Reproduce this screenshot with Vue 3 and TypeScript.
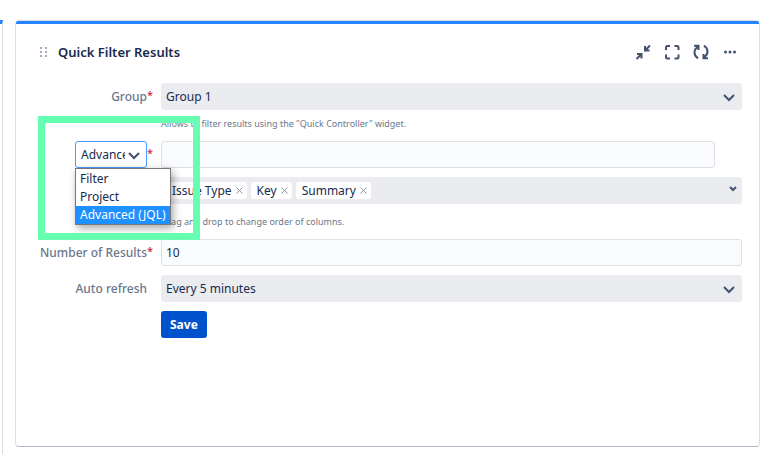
<script setup lang="ts">
import { ref } from 'vue'

const group = ref('Group 1')
const source = ref('Advanced (JQL)')
const sources = ['Filter', 'Project', 'Advanced (JQL)']
const query = ref('')
const columns = ref(['Issue Type', 'Key', 'Summary'])
const count = ref('10')
const refresh = ref('Every 5 minutes')

function removeColumn(name: string) {
  columns.value = columns.value.filter((c) => c !== name)
}
</script>

<template>
  <main class="board">
    <div class="neighbour"></div>
    <section class="gadget">
      <header class="head">
        <svg class="grip" width="8" height="10" viewBox="0 0 8 10" aria-hidden="true">
          <path d="M0 0h2v2H0zM5 0h2v2H5zM0 4h2v2H0zM5 4h2v2H5zM0 8h2v2H0zM5 8h2v2H5z" />
        </svg>
        <h1>Quick Filter Results</h1>
        <div class="tools">
          <button type="button" aria-label="Minimize">
            <svg width="16" height="16" viewBox="0 0 16 16">
              <path d="M15 1.500L10.500 6M10 2v4.500h4.500M1.500 15L6 10.500M2 10h4.500v4.500" />
            </svg>
          </button>
          <button type="button" aria-label="Maximize">
            <svg width="16" height="16" viewBox="0 0 16 16">
              <path d="M2 6V3.500q0-1.500 1.500-1.500H6M10.500 2H13q1.500 0 1.500 1.500V6M14.500 10.500V13q0 1.500-1.500 1.500h-2.500M6 14.500H3.500q-1.500 0-1.500-1.500v-2.500" />
            </svg>
          </button>
          <button type="button" aria-label="Refresh">
            <svg width="16" height="16" viewBox="0 0 16 16">
              <path d="M5 14.300Q1.500 12 1.500 8.500Q1.500 5 5 2.500M1 1.700H5.500V6M11 1.700Q14.500 4 14.500 7.500Q14.500 11 11 13.500M15 14.300H10.500V10" />
            </svg>
          </button>
          <button type="button" aria-label="More">
            <svg width="16" height="16" viewBox="0 0 16 16">
              <g class="dots"><circle cx="3.500" cy="8" r="1.500" /><circle cx="8" cy="8" r="1.500" /><circle cx="12.500" cy="8" r="1.500" /></g>
            </svg>
          </button>
        </div>
      </header>

      <form class="form" @submit.prevent>
        <div class="row">
          <div class="name"><label for="group">Group</label><span class="req">*</span></div>
          <div class="field">
            <div class="pick">
              <select id="group" v-model="group"><option>Group 1</option></select>
              <svg class="chevron" width="12" height="8" viewBox="0 0 12 8"><path d="M1 1l5 5 5-5" /></svg>
            </div>
            <p class="hint">Allows to filter results using the "Quick Controller" widget.</p>
          </div>
        </div>

        <div class="row">
          <div class="name">
            <div class="source">
              <select v-model="source" aria-label="Source">
                <option v-for="s in sources" :key="s">{{ s }}</option>
              </select>
              <svg class="chevron" width="12" height="8" viewBox="0 0 12 8"><path d="M1 1l5 5 5-5" /></svg>
              <ul class="menu" role="listbox" aria-label="Source">
                <li
                  v-for="s in sources"
                  :key="s"
                  role="option"
                  :aria-selected="s === source"
                  :class="{ active: s === source }"
                  @click="source = s"
                >{{ s }}</li>
              </ul>
            </div>
            <span class="req">*</span>
          </div>
          <div class="field query">
            <input v-model="query" type="text" aria-label="Query" />
          </div>
        </div>

        <div class="row">
          <div class="name"></div>
          <div class="field">
            <div class="tags">
              <span v-for="c in columns" :key="c" class="tag">
                {{ c }}
                <button type="button" :aria-label="'Remove ' + c" @click="removeColumn(c)">
                  <svg width="7" height="7" viewBox="0 0 7 7"><path d="M0.500 0.500l6 6M6.500 0.500l-6 6" /></svg>
                </button>
              </span>
              <svg class="chevron small" width="8" height="6" viewBox="0 0 8 6"><path d="M1 1l3 3 3-3" /></svg>
            </div>
            <p class="hint roomy">Drag and drop to change order of columns.</p>
          </div>
        </div>

        <div class="row">
          <div class="name"><label for="count">Number of Results</label><span class="req">*</span></div>
          <div class="field"><input id="count" v-model="count" type="text" /></div>
        </div>

        <div class="row">
          <div class="name"><label for="refresh">Auto refresh</label><span class="req"></span></div>
          <div class="field">
            <div class="pick">
              <select id="refresh" v-model="refresh"><option>Every 5 minutes</option></select>
              <svg class="chevron" width="12" height="8" viewBox="0 0 12 8"><path d="M1 1l5 5 5-5" /></svg>
            </div>
          </div>
        </div>

        <div class="row actions">
          <div class="name"></div>
          <div class="field"><button type="submit" class="save">Save</button></div>
        </div>
      </form>
      <div class="highlight"></div>
    </section>
  </main>
</template>

<style>
body {
  background: #fff;
}
</style>

<style scoped>
* {
  box-sizing: border-box;
}
.board {
  display: flex;
  gap: 12px;
  min-height: 100vh;
  padding: 20px 12px 0 0;
  color: #172b4d;
  font: 12px/18px "Noto Sans", sans-serif;
}
select,
input,
button {
  font: inherit;
  color: inherit;
}
.neighbour {
  flex: 0 0 3px;
  border-top: 4px solid #2684ff;
  border-right: 1px solid #dcdfe6;
}
.gadget {
  position: relative;
  flex: 1;
  min-width: 0;
  margin-bottom: 7px;
  border: 1px solid #dcdfe6;
  border-bottom-color: #b0b8c8;
  border-radius: 4px;
}
.gadget::before {
  content: "";
  display: block;
  height: 3px;
  background: #2684ff;
  border-radius: 2px 2px 0 0;
}
.head {
  display: flex;
  align-items: center;
  height: 56px;
  padding: 0 21px 0 24px;
}
.grip {
  margin-right: 10px;
}
h1 {
  flex: 1;
  margin: 0;
  font-size: 13px;
  font-weight: 600;
}
.tools {
  display: flex;
  gap: 13px;
}
.tools button {
  display: flex;
  padding: 0;
  border: 0;
  background: none;
}
svg path {
  fill: none;
  stroke: #42526e;
  stroke-width: 2;
}
.dots {
  fill: #42526e;
}
.grip path {
  fill: #a5adba;
  stroke: none;
}
.form {
  padding: 3px 17px 24px 16px;
}
.row {
  display: flex;
  gap: 8px;
  margin-bottom: 9px;
}
.name {
  display: flex;
  flex: 0 0 121px;
  justify-content: flex-end;
  align-items: center;
  height: 27px;
  color: #6b778c;
  font-weight: 500;
  white-space: nowrap;
}
.req {
  flex: 0 0 6px;
  align-self: flex-start;
  min-width: 0;
  color: #d0243c;
  font-size: 11px;
  line-height: 24px;
}
.field {
  flex: 1;
  min-width: 0;
}
.query {
  padding-right: 27px;
}
.pick,
.source {
  position: relative;
}
.pick select,
.field input {
  display: block;
  width: 100%;
  height: 27px;
  padding: 0 5px;
  border: 0;
  border-radius: 3px;
  background: #ebecf0;
  appearance: none;
}
.field input {
  padding: 0 4px;
  border: 1px solid #dfe1e6;
  background: #fafbfc;
}
.chevron {
  position: absolute;
  right: 7px;
  top: 11px;
  pointer-events: none;
}
.chevron.small {
  right: 5px;
  top: 9px;
}
.hint {
  margin: 0;
  padding-top: 6px;
  color: #6b778c;
  font-size: 9px;
  line-height: 16px;
}
.hint.roomy {
  padding-top: 10px;
}
.source {
  flex: 0 0 72px;
  color: #172b4d;
  font-weight: 400;
}
.source select {
  display: block;
  width: 100%;
  height: 27px;
  padding: 0 21px 0 5px;
  border: 1px solid #4c9aff;
  border-radius: 3px;
  background: #fff;
  appearance: none;
}
.menu {
  position: absolute;
  z-index: 1;
  top: 27px;
  left: 0;
  width: 96px;
  margin: 0;
  padding: 1px 0 0;
  border: 1px solid #767676;
  background: #fff;
  box-shadow: 2px 3px 8px rgba(0, 0, 0, 0.35);
  list-style: none;
}
.menu li {
  padding: 0 4px;
}
.menu .active {
  background: #1e90ff;
  color: #fff;
}
.tags {
  position: relative;
  display: flex;
  gap: 4px;
  height: 27px;
  padding: 5px;
  border-radius: 3px;
  background: #ebecf0;
}
.tag {
  display: flex;
  align-items: center;
  gap: 4px;
  height: 17px;
  padding: 0 4px 0 6px;
  border-radius: 3px;
  background: #fff;
  white-space: nowrap;
}
.tag button {
  display: flex;
  padding: 0;
  border: 0;
  background: none;
}
.tag path {
  stroke: #8993a4;
  stroke-width: 1;
}
.actions {
  margin: 0;
}
.save {
  display: block;
  height: 27px;
  padding: 0 9px;
  border: 0;
  border-radius: 3px;
  background: #0052cc;
  color: #fff;
  font-weight: 700;
}
.highlight {
  position: absolute;
  z-index: 2;
  top: 95px;
  left: 22px;
  width: 162px;
  height: 124px;
  border: 7px solid #66ffb2;
  pointer-events: none;
}
</style>
